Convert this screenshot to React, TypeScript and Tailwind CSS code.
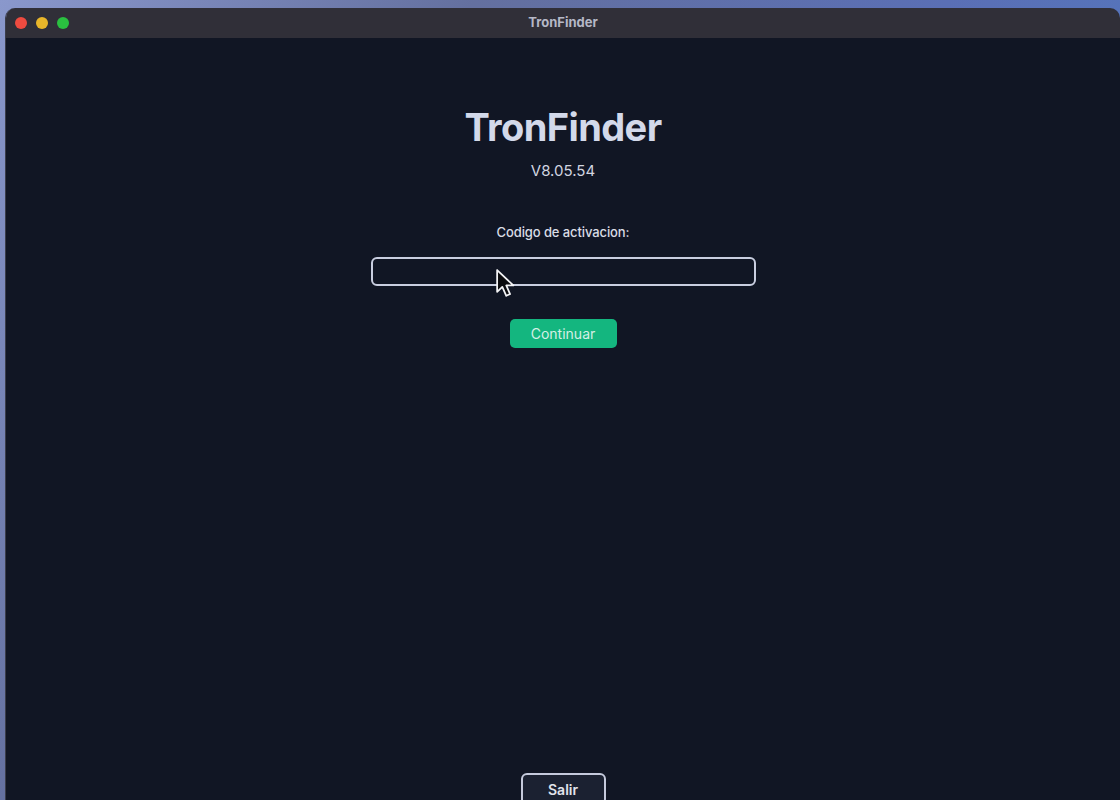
import { useState } from 'react';

// macOS style arrow cursor captured in the screenshot
function Cursor() {
    return (
        <svg width="22" height="30" viewBox="0 0 16 22" className="pointer-events-none absolute left-[124px] top-[11px]">
            <path
                d="M1.5 1.5 L1.5 17.5 L5.3 13.9 L8.2 20.4 L11 19.1 L8.2 12.8 L13.4 12.8 Z"
                fill="#0b0b0e"
                stroke="#f4f4f6"
                strokeWidth="1.3"
                strokeLinejoin="round"
            />
        </svg>
    );
}

export default function App() {
    const [code, setCode] = useState('');

    return (
        <div className="w-[1120px] h-[800px] overflow-hidden bg-[linear-gradient(120deg,#8a98cc_0%,#64709f_30%,#5a6fb5_60%,#4c7ec6_100%)] pl-[5px] pt-[8px] font-['Inter','Liberation_Sans',sans-serif]">
            <div className="h-[800px] flex flex-col rounded-t-[10px] overflow-hidden border-l border-[#3b3d4a]">
                {/* Title bar */}
                <div className="relative h-[30px] shrink-0 bg-[#302f38] flex items-center">
                    <div className="flex items-center gap-[9px] pl-[9px]">
                        <span className="w-[12px] h-[12px] rounded-full bg-[#ee4b40]" />
                        <span className="w-[12px] h-[12px] rounded-full bg-[#e9b62a]" />
                        <span className="w-[12px] h-[12px] rounded-full bg-[#2ac040]" />
                    </div>
                    <span className="absolute inset-x-0 text-center text-[13px] font-bold text-[#b5b8c7]">TronFinder</span>
                </div>

                {/* Window content */}
                <div className="flex-1 bg-[#111624] flex flex-col items-center pt-[65px] pb-[3px]">
                    <h1 className="text-[38px] leading-[48px] font-bold text-[#d3d9ea] tracking-[-0.6px]">TronFinder</h1>
                    <p className="mt-[10px] text-[15px] leading-[20px] text-[#d1d5e0]">V8.05.54</p>

                    <label className="mt-[42px] text-[13px] leading-[18px] font-medium tracking-[-0.1px] text-[#dadde6]">
                        Codigo de activacion:
                    </label>
                    <div className="relative mt-[16px]">
                        <input
                            value={code}
                            onChange={(e) => setCode(e.target.value)}
                            className="w-[385px] h-[29px] rounded-[6px] border-2 border-[#c9cee0] bg-transparent px-2 text-sm text-white outline-none"
                        />
                        <Cursor />
                    </div>

                    <button className="mt-[33px] w-[107px] h-[29px] rounded-[5px] bg-[#14b67f] text-[14px] text-[#d4efe5]">
                        Continuar
                    </button>

                    <button className="mt-auto w-[85px] h-[32px] rounded-[6px] border-2 border-[#c5cadc] bg-[#1b2131] text-[14px] font-semibold text-[#e1e4ec]">
                        Salir
                    </button>
                </div>
            </div>
        </div>
    );
}
